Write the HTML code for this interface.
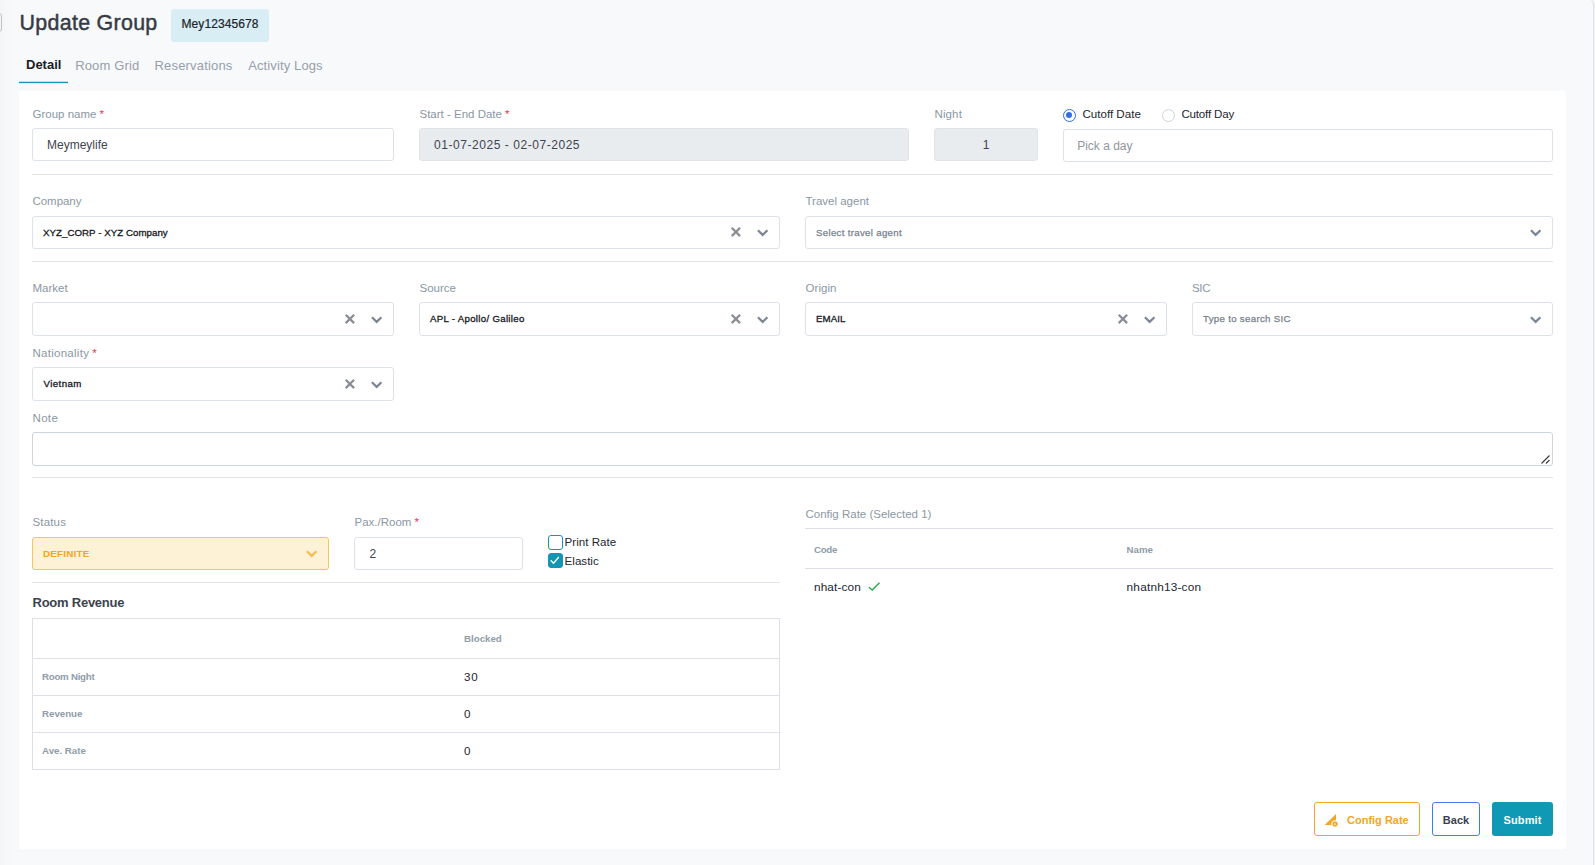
<!DOCTYPE html>
<html lang="en">
<head>
<meta charset="utf-8">
<title>Update Group</title>
<style>
*{box-sizing:border-box;margin:0;padding:0}
html,body{width:1595px;height:865px;overflow:hidden}
body{background:#f8f9fb linear-gradient(90deg,#f4f5f7 0,#f5f6f8 4px,#f7f8fa 8px,#f8f9fb 12px) no-repeat;background-size:12px 100%;font-family:"Liberation Sans",sans-serif;color:#343a40;position:relative}
.abs{position:absolute}
.stub{position:absolute;left:-10px;top:13px;width:12px;height:19px;border:1px solid #bcc2c8;border-radius:3px}
.edge{position:absolute;left:0;top:-1px;width:1594px;height:870px;border-right:1px solid #e1e2e6;border-top-right-radius:6px;box-shadow:1px 0 0 #eeeff2;pointer-events:none}
h1{position:absolute;left:19.6px;top:8.5px;font-size:21.4px;line-height:28px;font-weight:400;color:#353b46;letter-spacing:.2px;white-space:nowrap;-webkit-text-stroke:.45px #353b46}
.badge{position:absolute;left:171px;top:9px;width:98px;height:33px;border-radius:3px;background:#d9edf4;color:#20232b;font-size:12px;line-height:31px;text-align:center;letter-spacing:.1px;-webkit-text-stroke:.2px #20232b}
.tabs{position:absolute;left:19px;top:50px;height:33px;list-style:none;white-space:nowrap}
.tabs li{position:absolute;top:1px;font-size:13px;line-height:30px;color:#95a0ab;white-space:nowrap}
.tabs li.on{color:#191c24;font-weight:700;font-size:13px;top:0}
.tabs li.on:after{content:"";position:absolute;left:-7px;width:49px;top:32px;height:1px;background:#1396b4;box-shadow:0 -1px 0 rgba(19,150,180,.25),0 1px 0 rgba(19,150,180,.15)}
.card{position:absolute;left:19px;top:91px;width:1547px;height:758px;background:#fff;border-radius:3px}
.f{position:absolute}
.f label,.lbl{position:absolute;left:.5px;top:0;font-size:11.5px;line-height:14px;color:#8b97a4;white-space:nowrap}
.req{color:#e8364f;margin-left:3px}
.ctl{position:absolute;left:0;width:100%;height:33px;border:1px solid #dde1e8;border-radius:3px;background:#fff;font-size:12px;line-height:33px;color:#3e4450;padding-left:14px;white-space:nowrap}
.ctl.dis{background:#e9ecef;border-color:#e1e3e6}
.ph{color:#8f969d}
.sel{padding-left:10px;font-size:9.7px;line-height:31px;color:#151824;-webkit-text-stroke:.3px #151824}
.sel.phd{color:#77818e;-webkit-text-stroke:.25px #77818e}
.sel svg{position:absolute;top:0;right:-1px;width:60px;height:31px}
.tall{height:34px}
.tall svg{top:1px}
hr{position:absolute;border:0;height:1px;background:#e2e5e9}
.warn{background:#fdf2d5;border-color:#f8c45e;color:#f3a61f;font-weight:700;font-size:9.9px;-webkit-text-stroke:0}
.chk{position:absolute;width:15px;height:15px;border:1.5px solid #1396b4;border-radius:3px;background:#fff}
.chk.on{background:#1396b4}
.chk svg{position:absolute;left:-1.5px;top:-1.5px;width:15px;height:15px}
.cl{position:absolute;font-size:11.6px;line-height:15px;color:#23262f;white-space:nowrap}
.rad{position:absolute;width:13px;height:13px;border-radius:50%;background:#fff;border:1px solid #cfd1d4}
.rad.on{border:1.4px solid #2f6fe4}
.rad.on:after{content:"";position:absolute;left:1.9px;top:1.9px;width:6.4px;height:6.4px;border-radius:50%;background:#2f6fe4}
h2{position:absolute;font-size:13px;line-height:16px;font-weight:700;color:#3c434d;white-space:nowrap}
table{border-collapse:collapse;position:absolute}
.rev{left:13px;top:527px;width:748px;border:1px solid #dde1e7}
.rev th,.rev td{border-top:1px solid #dde1e7;text-align:left;padding:0 0 0 9px;white-space:nowrap}
.rev th{font-size:9.7px;font-weight:700;color:#909ca8}
.rev th+th,.rev th+td,.cfg th+th,.cfg td+td{padding-left:9.6px}
.rev td{font-size:11.6px;color:#23262f}
.rev tr{height:37px}
.rev tbody th,.rev tbody td{padding-bottom:2px}
.rev thead tr{height:40px}
.cfg{left:786px;top:437px;width:748px}
.cfg th,.cfg td{text-align:left;padding:0 0 0 9px;white-space:nowrap}
.cfg th{font-size:9.7px;font-weight:700;color:#909ca8;height:40px;padding-top:2px;border-top:1px solid #dde1e7;border-bottom:1px solid #dde1e7}
.cfg td{font-size:11.8px;color:#23262f;height:37px}
.btn{position:absolute;top:711px;height:34px;border-radius:3px;border:1px solid transparent;font-size:11px;font-weight:700;line-height:34px;text-align:center;white-space:nowrap}
.b1{left:1295px;width:106px;border-color:#f4a623;color:#f4a623;background:#fff;text-align:left;padding-left:32px}
.b1 svg{position:absolute;left:8px;top:9px;width:16px;height:16px;overflow:visible}
.b2{left:1413px;width:48px;border-color:#3f7fea;color:#3a414e;background:#fff}
.b3{left:1473px;width:61px;background:#0f99b4;color:#fff}

/* per-text metric tuning (fallback font width compensation) */
#t-h1{letter-spacing:.3px}
#t-tab2{letter-spacing:.15px;margin-left:-.8px}
#t-tab3{letter-spacing:.18px}
#t-tab4{letter-spacing:.12px;margin-left:.7px}
#v-date{letter-spacing:.55px}
#l-night{letter-spacing:.12px}
#l-cday{letter-spacing:-.19px}
#l-company{letter-spacing:-.04px}
#v-company{letter-spacing:.05px}
#l-origin{letter-spacing:.06px}
#v-origin{letter-spacing:.05px}
#l-sic{letter-spacing:-.25px;margin-left:-.6px}
#l-nat{letter-spacing:.27px}
#v-nat{letter-spacing:.4px;margin-left:.6px}
#l-note{letter-spacing:.33px}
#l-status{letter-spacing:.16px}
#v-status{letter-spacing:.2px}
#v-source{letter-spacing:.29px}
#v-travel{letter-spacing:.3px}
#v-sic{letter-spacing:.3px}
#t-rev{letter-spacing:-.24px}
#t-rn{letter-spacing:-.25px}
#t-code{letter-spacing:-.3px}
#t-30{letter-spacing:.6px}
#t-nn{letter-spacing:.21px}
#t-nc{letter-spacing:.12px}
#b-sub{letter-spacing:.15px}
</style>
</head>
<body>
<div class="stub"></div>
<div class="edge"></div>
<h1><span id="t-h1">Update Group</span></h1>
<span class="badge"><span id="t-badge">Mey12345678</span></span>
<ul class="tabs">
  <li class="on" style="left:7px"><span id="t-tab1">Detail</span></li>
  <li style="left:57px"><span id="t-tab2">Room Grid</span></li>
  <li style="left:135.5px"><span id="t-tab3">Reservations</span></li>
  <li style="left:228.5px"><span id="t-tab4">Activity Logs</span></li>
</ul>

<main class="card">
  <!-- row 1 -->
  <div class="f" style="left:13px;top:16px;width:362px;height:54px">
    <label><span id="l-group">Group name</span><span class="req">*</span></label>
    <div class="ctl" style="top:21px"><span id="v-group">Meymeylife</span></div>
  </div>
  <div class="f" style="left:400px;top:16px;width:490px;height:54px">
    <label><span id="l-date">Start - End Date</span><span class="req">*</span></label>
    <div class="ctl dis" style="top:21px"><span id="v-date">01-07-2025 - 02-07-2025</span></div>
  </div>
  <div class="f" style="left:915px;top:16px;width:104px;height:54px">
    <label><span id="l-night">Night</span></label>
    <div class="ctl dis" style="top:21px;text-align:center;padding:0"><span id="v-night">1</span></div>
  </div>
  <div class="f" style="left:1044px;top:16px;width:490px;height:55px">
    <span class="rad on" style="left:0;top:2px"></span><span class="cl" style="left:19.4px;top:-1px;font-size:11.6px" id="l-cdate">Cutoff Date</span>
    <span class="rad" style="left:99px;top:2px"></span><span class="cl" style="left:118.4px;top:-1px;font-size:11.6px" id="l-cday">Cutoff Day</span>
    <div class="ctl" style="top:22px;padding-left:13.2px"><span class="ph" id="v-pick">Pick a day</span></div>
  </div>
  <hr style="left:13px;top:83px;width:1521px;background:#e3e4e6">

  <!-- row 2 -->
  <div class="f" style="left:13px;top:103px;width:748px;height:55px">
    <label><span id="l-company">Company</span></label>
    <div class="ctl sel" style="top:22px"><span id="v-company">XYZ_CORP - XYZ Company</span>
      <svg viewBox="0 0 60 31"><path d="M11.7 10.7l8.4 8.4M20.1 10.7l-8.4 8.4" stroke="#8a8f96" stroke-width="2.3" fill="none"/><path d="M37.9 13.2l4.75 4.7 4.75-4.7" stroke="#7a8694" stroke-width="2.2" fill="none"/></svg>
    </div>
  </div>
  <div class="f" style="left:786px;top:103px;width:748px;height:55px">
    <label><span id="l-travel">Travel agent</span></label>
    <div class="ctl sel phd" style="top:22px"><span id="v-travel">Select travel agent</span>
      <svg viewBox="0 0 60 31"><path d="M37.9 13.2l4.75 4.7 4.75-4.7" stroke="#7a8694" stroke-width="2.2" fill="none"/></svg>
    </div>
  </div>
  <hr style="left:13px;top:170px;width:1521px">

  <!-- row 3 -->
  <div class="f" style="left:13px;top:190px;width:362px;height:55px">
    <label><span id="l-market">Market</span></label>
    <div class="ctl sel tall" style="top:21px">
      <svg viewBox="0 0 60 31"><path d="M11.7 10.7l8.4 8.4M20.1 10.7l-8.4 8.4" stroke="#8a8f96" stroke-width="2.3" fill="none"/><path d="M37.9 13.2l4.75 4.7 4.75-4.7" stroke="#7a8694" stroke-width="2.2" fill="none"/></svg>
    </div>
  </div>
  <div class="f" style="left:400px;top:190px;width:361px;height:55px">
    <label><span id="l-source">Source</span></label>
    <div class="ctl sel tall" style="top:21px"><span id="v-source">APL - Apollo/ Galileo</span>
      <svg viewBox="0 0 60 31"><path d="M11.7 10.7l8.4 8.4M20.1 10.7l-8.4 8.4" stroke="#8a8f96" stroke-width="2.3" fill="none"/><path d="M37.9 13.2l4.75 4.7 4.75-4.7" stroke="#7a8694" stroke-width="2.2" fill="none"/></svg>
    </div>
  </div>
  <div class="f" style="left:786px;top:190px;width:362px;height:55px">
    <label><span id="l-origin">Origin</span></label>
    <div class="ctl sel tall" style="top:21px"><span id="v-origin">EMAIL</span>
      <svg viewBox="0 0 60 31"><path d="M11.7 10.7l8.4 8.4M20.1 10.7l-8.4 8.4" stroke="#8a8f96" stroke-width="2.3" fill="none"/><path d="M37.9 13.2l4.75 4.7 4.75-4.7" stroke="#7a8694" stroke-width="2.2" fill="none"/></svg>
    </div>
  </div>
  <div class="f" style="left:1173px;top:190px;width:361px;height:55px">
    <label><span id="l-sic">SIC</span></label>
    <div class="ctl sel phd tall" style="top:21px"><span id="v-sic">Type to search SIC</span>
      <svg viewBox="0 0 60 31"><path d="M37.9 13.2l4.75 4.7 4.75-4.7" stroke="#7a8694" stroke-width="2.2" fill="none"/></svg>
    </div>
  </div>

  <!-- row 4 -->
  <div class="f" style="left:13px;top:255px;width:362px;height:55px">
    <label><span id="l-nat">Nationality</span><span class="req">*</span></label>
    <div class="ctl sel tall" style="top:21px"><span id="v-nat">Vietnam</span>
      <svg viewBox="0 0 60 31"><path d="M11.7 10.7l8.4 8.4M20.1 10.7l-8.4 8.4" stroke="#8a8f96" stroke-width="2.3" fill="none"/><path d="M37.9 13.2l4.75 4.7 4.75-4.7" stroke="#7a8694" stroke-width="2.2" fill="none"/></svg>
    </div>
  </div>

  <!-- note -->
  <div class="f" style="left:13px;top:320px;width:1521px;height:55px">
    <label><span id="l-note">Note</span></label>
    <div class="ctl" style="top:21px;height:34px;border-color:#ced4dc">
      <svg style="position:absolute;right:2px;bottom:1px;width:10px;height:10px" viewBox="0 0 10 10"><path d="M1.5 9.5l8-8M6 9.5l3.5-3.5" stroke="#3a3a3a" stroke-width="1.1" fill="none"/></svg>
    </div>
  </div>
  <hr style="left:13px;top:386px;width:1521px">

  <!-- status row -->
  <div class="f" style="left:13px;top:424px;width:297px;height:55px">
    <label><span id="l-status">Status</span></label>
    <div class="ctl sel warn" style="top:22px"><span id="v-status">DEFINITE</span>
      <svg viewBox="0 0 60 31"><path d="M37.9 13.2l4.75 4.7 4.75-4.7" stroke="#f6bd4f" stroke-width="2.2" fill="none"/></svg>
    </div>
  </div>
  <div class="f" style="left:335px;top:424px;width:169px;height:55px">
    <label><span id="l-pax">Pax./Room</span><span class="req">*</span></label>
    <div class="ctl" style="top:22px;padding-left:14.4px"><span id="v-pax">2</span></div>
  </div>
  <span class="chk" style="left:529px;top:444px"></span><span class="cl" style="left:545.6px;top:443px" id="l-print">Print Rate</span>
  <span class="chk on" style="left:529px;top:462px"><svg viewBox="0 0 15 15"><path d="M2.7 7.3l2.8 2.9 5.3-6.2" stroke="#fff" stroke-width="1.25" fill="none"/></svg></span><span class="cl" style="left:545.6px;top:462px" id="l-elastic">Elastic</span>
  <hr style="left:13px;top:491px;width:748px">

  <h2 style="left:13.5px;top:503.5px"><span id="t-rev">Room Revenue</span></h2>
  <table class="rev">
    <thead><tr><th style="width:422px;border-top:0"></th><th style="border-top:0"><span id="t-blocked">Blocked</span></th></tr></thead>
    <tbody>
      <tr><th><span id="t-rn">Room Night</span></th><td><span id="t-30">30</span></td></tr>
      <tr><th><span id="t-rv">Revenue</span></th><td><span id="t-0a">0</span></td></tr>
      <tr><th><span id="t-ar">Ave. Rate</span></th><td><span id="t-0b">0</span></td></tr>
    </tbody>
  </table>

  <!-- config rate -->
  <span class="lbl" style="left:786.5px;top:416px" id="l-cfg">Config Rate (Selected 1)</span>
  <table class="cfg">
    <thead><tr><th style="width:312px"><span id="t-code">Code</span></th><th><span id="t-name">Name</span></th></tr></thead>
    <tbody><tr><td><span id="t-nc">nhat-con</span><svg style="width:13px;height:10px;margin-left:7.2px;vertical-align:-1px" viewBox="0 0 13 10"><path d="M.9 5.2l3.3 2.9L11.5 .8" stroke="#2ba84a" stroke-width="1.4" fill="none"/></svg></td><td><span id="t-nn">nhatnh13-con</span></td></tr></tbody>
  </table>

  <!-- buttons -->
  <div class="btn b1"><svg viewBox="0 0 16 16"><path d="M1.7 12.9L13 1.9v6.4a3.8 3.8 0 0 0-4.7 4.6z" fill="#f4a623"/><circle cx="12" cy="12" r="1.6" fill="none" stroke="#f4a623" stroke-width="1.5"/><path d="M12 8.9v6.2M8.9 12h6.2M9.8 9.8l4.4 4.4M14.2 9.8l-4.4 4.4" stroke="#f4a623" stroke-width="1.1" fill="none"/><circle cx="12" cy="12" r=".85" fill="#fff"/></svg><span id="b-cfg">Config Rate</span></div>
  <div class="btn b2"><span id="b-back">Back</span></div>
  <div class="btn b3"><span id="b-sub">Submit</span></div>
</main>
</body>
</html>
